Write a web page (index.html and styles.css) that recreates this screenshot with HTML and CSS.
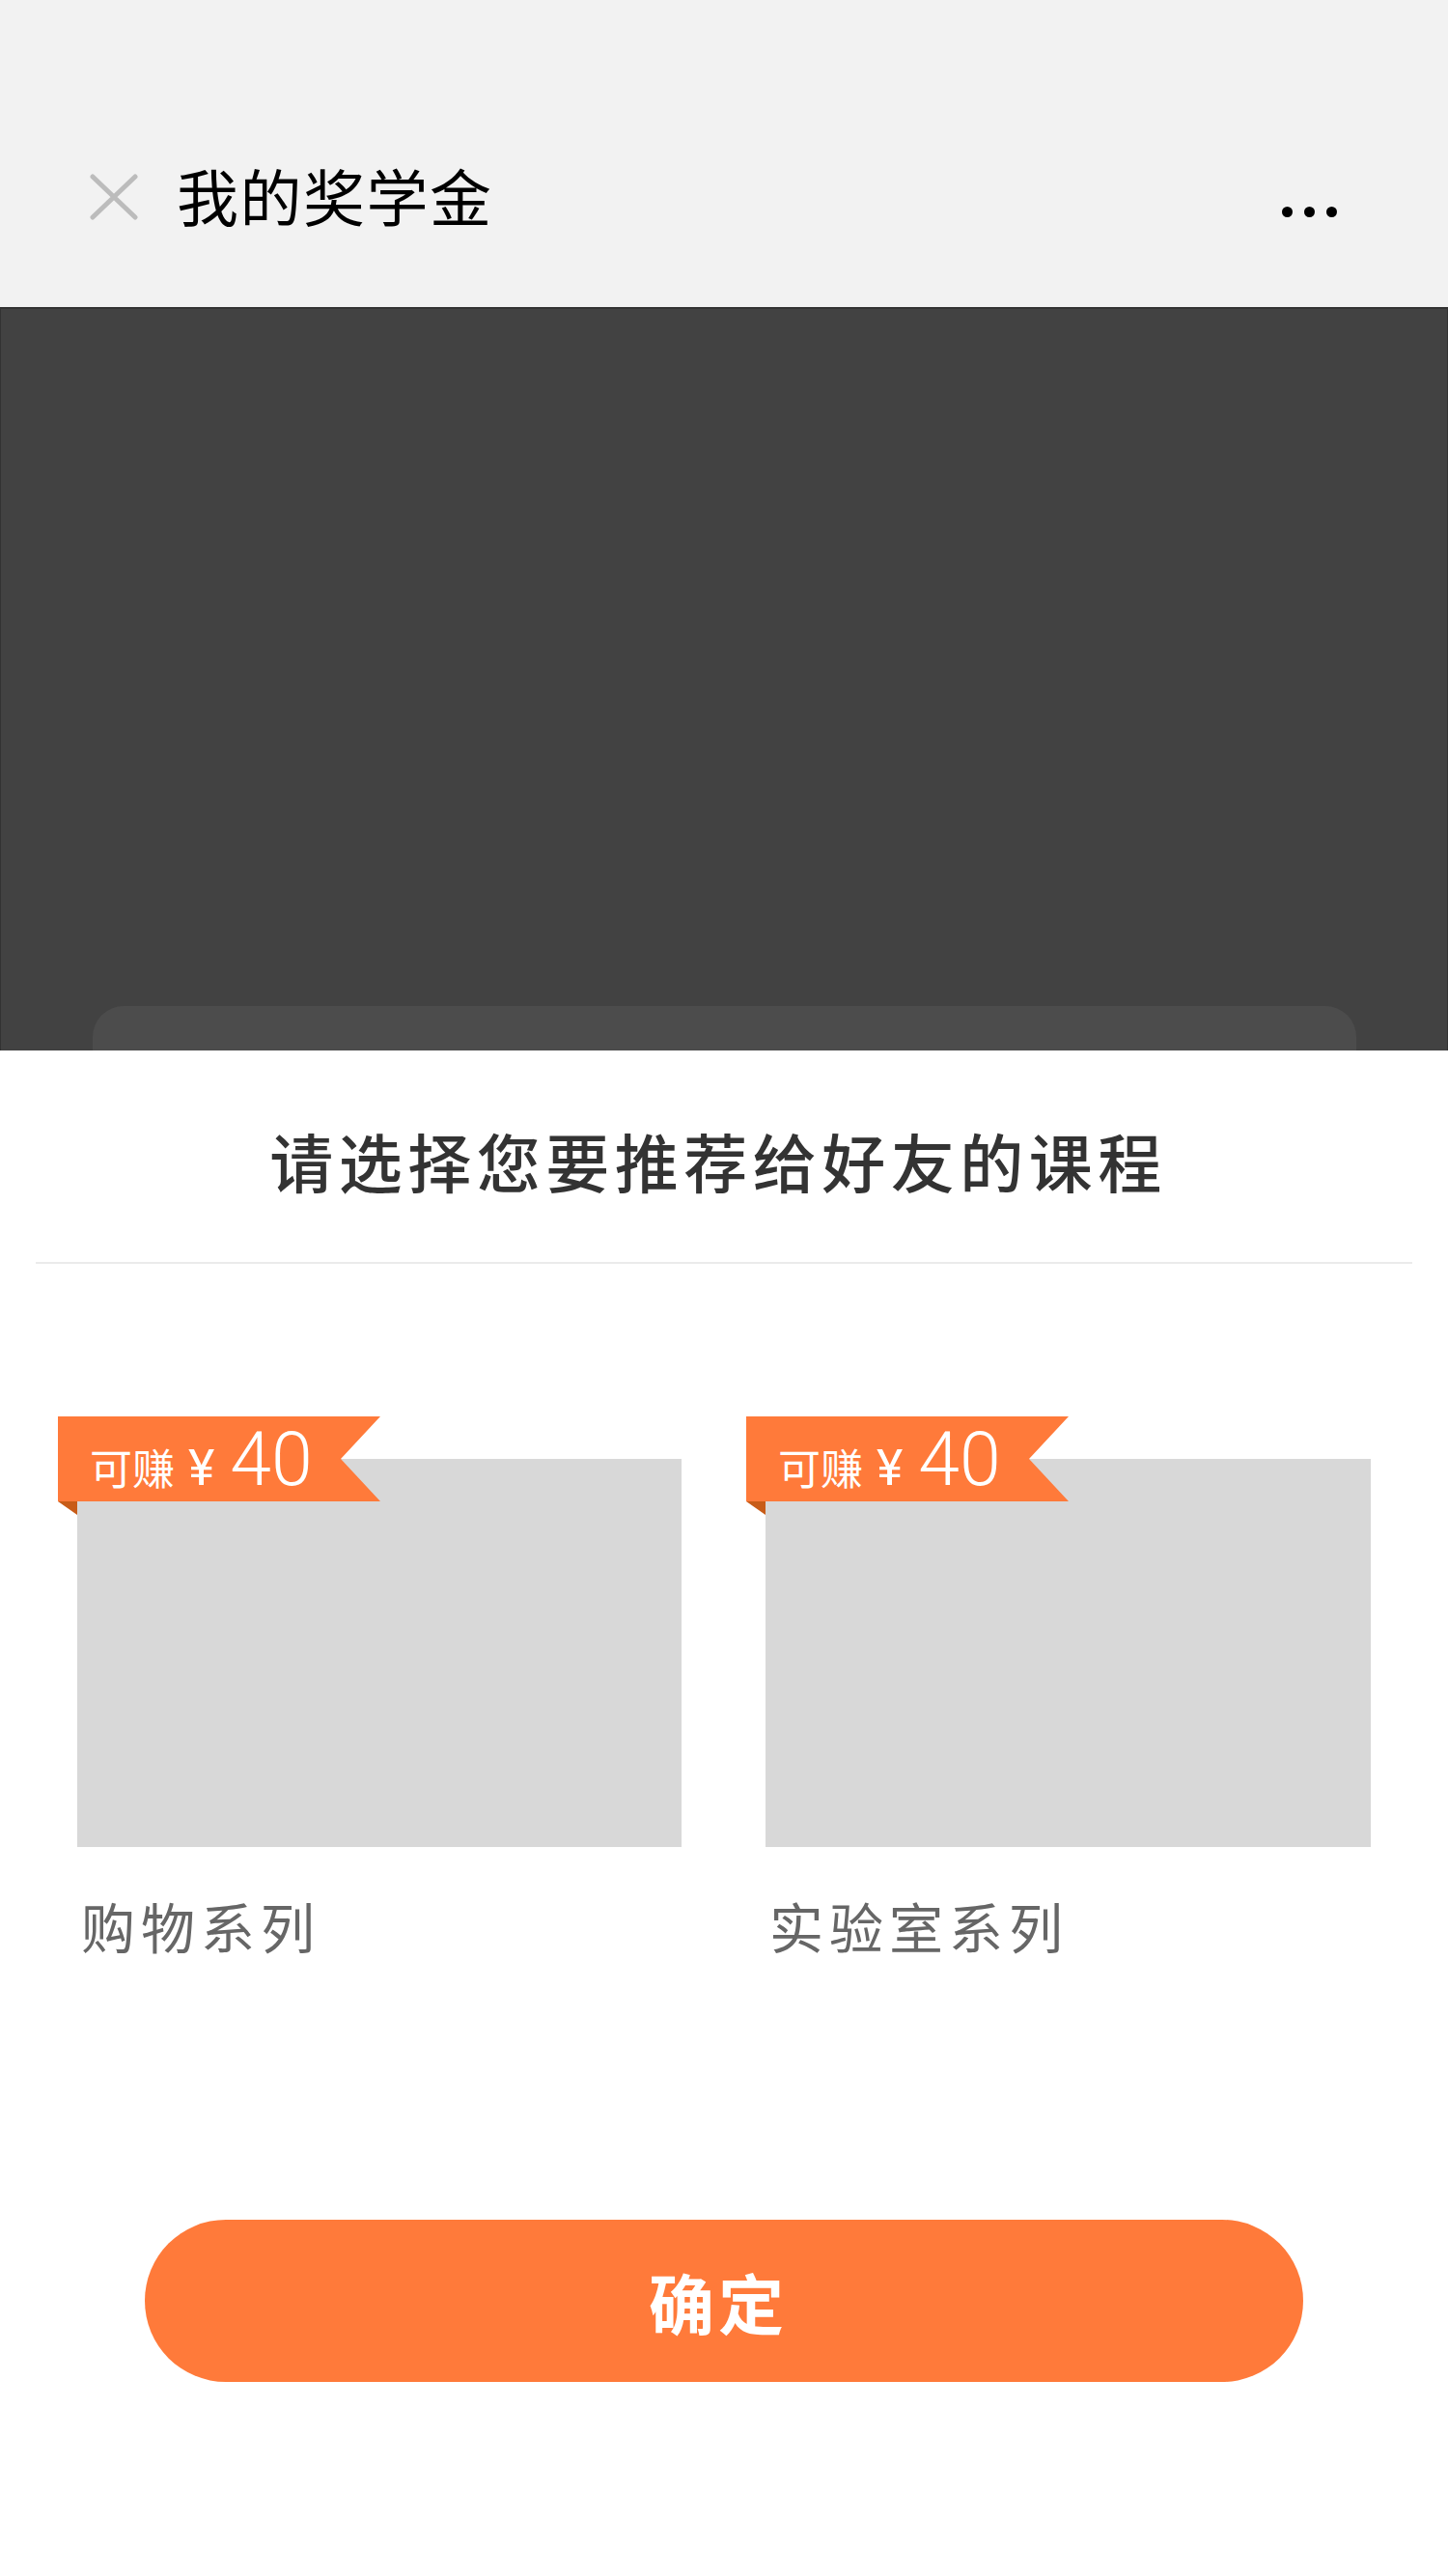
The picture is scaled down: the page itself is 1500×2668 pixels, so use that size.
FILE: index.html
```html
<!DOCTYPE html>
<html lang="zh-CN">
<head>
<meta charset="utf-8">
<title>我的奖学金</title>
<link rel="stylesheet" href="styles.css">
</head>
<body>
<header class="topbar">
  <svg class="close" width="50" height="48" viewBox="0 0 50 48" aria-label="关闭">
    <path d="M3 3 L47 45 M47 3 L3 45" stroke="#bcbcbc" stroke-width="5" stroke-linecap="round" fill="none"/>
  </svg>
  <h1 class="topbar-title">我的奖学金</h1>
  <div class="more"><span></span><span></span><span></span></div>
</header>

<section class="backdrop">
  <div class="backdrop-card"></div>
</section>

<section class="sheet">
  <h2 class="sheet-title">请选择您要推荐给好友的课程</h2>
  <div class="divider"></div>

  <div class="courses">
    <div class="course">
      <div class="ribbon">
        <span class="r-label">可赚</span><span class="r-yen">¥</span><span class="r-num">40</span>
      </div>
      <div class="fold"></div>
      <div class="thumb"></div>
      <div class="course-name">购物系列</div>
    </div>
    <div class="course">
      <div class="ribbon">
        <span class="r-label">可赚</span><span class="r-yen">¥</span><span class="r-num">40</span>
      </div>
      <div class="fold"></div>
      <div class="thumb"></div>
      <div class="course-name">实验室系列</div>
    </div>
  </div>

  <div class="actions">
    <button class="confirm">确定</button>
  </div>
</section>
</body>
</html>
```

FILE: styles.css
```css
* { box-sizing: border-box; }

html, body {
  margin: 0;
  padding: 0;
}

body {
  width: 1500px;
  min-height: 2668px;
  background: #ffffff;
  font-family: "Noto Sans CJK SC", "Noto Sans", sans-serif;
}

/* ---------- header ---------- */
.topbar {
  height: 318px;
  background: #f2f2f2;
  padding-top: 166px;
  display: flex;
  align-items: flex-start;
}

.close {
  margin-left: 93px;
  margin-top: 14px;
  flex: none;
}

.topbar-title {
  margin: 0 0 0 40px;
  font-size: 64px;
  line-height: 70px;
  font-weight: 400;
  letter-spacing: 1.5px;
  color: #000;
}

.more {
  margin-left: auto;
  margin-right: 115px;
  margin-top: 48px;
  display: flex;
  gap: 12px;
}

.more span {
  width: 11px;
  height: 11px;
  border-radius: 50%;
  background: #000;
}

/* ---------- dim backdrop ---------- */
.backdrop {
  height: 770px;
  background: #424242;
  border-top: 2px solid #333333;
  border-left: 1px solid #333333;
  border-right: 1px solid #333333;
  padding: 722px 94px 0 95px;
}

.backdrop-card {
  height: 46px;
  background: #4c4c4c;
  border-radius: 32px 32px 0 0;
}

/* ---------- sheet ---------- */
.sheet {
  background: #fff;
}

.sheet-title {
  margin: 0;
  padding: 75px 12px 0 0;
  font-size: 66px;
  line-height: 76px;
  font-weight: 500;
  letter-spacing: 5.5px;
  text-align: center;
  color: #333333;
}

.divider {
  margin: 68px 37px 0;
  height: 2px;
  background: #ebebeb;
}

.courses {
  display: grid;
  grid-template-columns: 626px 627px;
  column-gap: 87px;
  padding-left: 80px;
  margin-top: 202px;
}

.course {
  position: relative;
}

.ribbon {
  position: absolute;
  left: -20px;
  top: -44px;
  width: 334px;
  height: 88px;
  background: #ff7a3a;
  clip-path: polygon(0 0, 100% 0, 293px 50%, 100% 100%, 0 100%);
  display: flex;
  align-items: baseline;
  padding-left: 33px;
  color: #fff;
  z-index: 2;
}

.r-label {
  font-size: 44px;
  line-height: 74px;
}

.r-yen {
  margin-left: 14px;
  font-family: Roboto, "Noto Sans", sans-serif;
  font-size: 52px;
  font-weight: 400;
}

.r-num {
  margin-left: 16px;
  font-family: Roboto, "Noto Sans", sans-serif;
  font-size: 77px;
  font-weight: 300;
}

.fold {
  position: absolute;
  left: -20px;
  top: 44px;
  width: 0;
  height: 0;
  border-top: 14px solid #c85c18;
  border-left: 20px solid transparent;
  z-index: 1;
}

.thumb {
  height: 402px;
  background: #d8d8d8;
}

.course-name {
  margin-top: 46px;
  font-size: 56px;
  line-height: 70px;
  letter-spacing: 6px;
  color: #666666;
  padding-left: 4px;
}

.actions {
  padding: 270px 150px 202px;
}

.confirm {
  display: block;
  width: 1200px;
  height: 168px;
  border: none;
  border-radius: 84px;
  background: #ff7a3a;
  color: #fff;
  font-family: "Noto Sans CJK SC", sans-serif;
  font-size: 68px;
  font-weight: 700;
  letter-spacing: 4px;
  padding: 0 12px 0 0;
  cursor: pointer;
}
```
